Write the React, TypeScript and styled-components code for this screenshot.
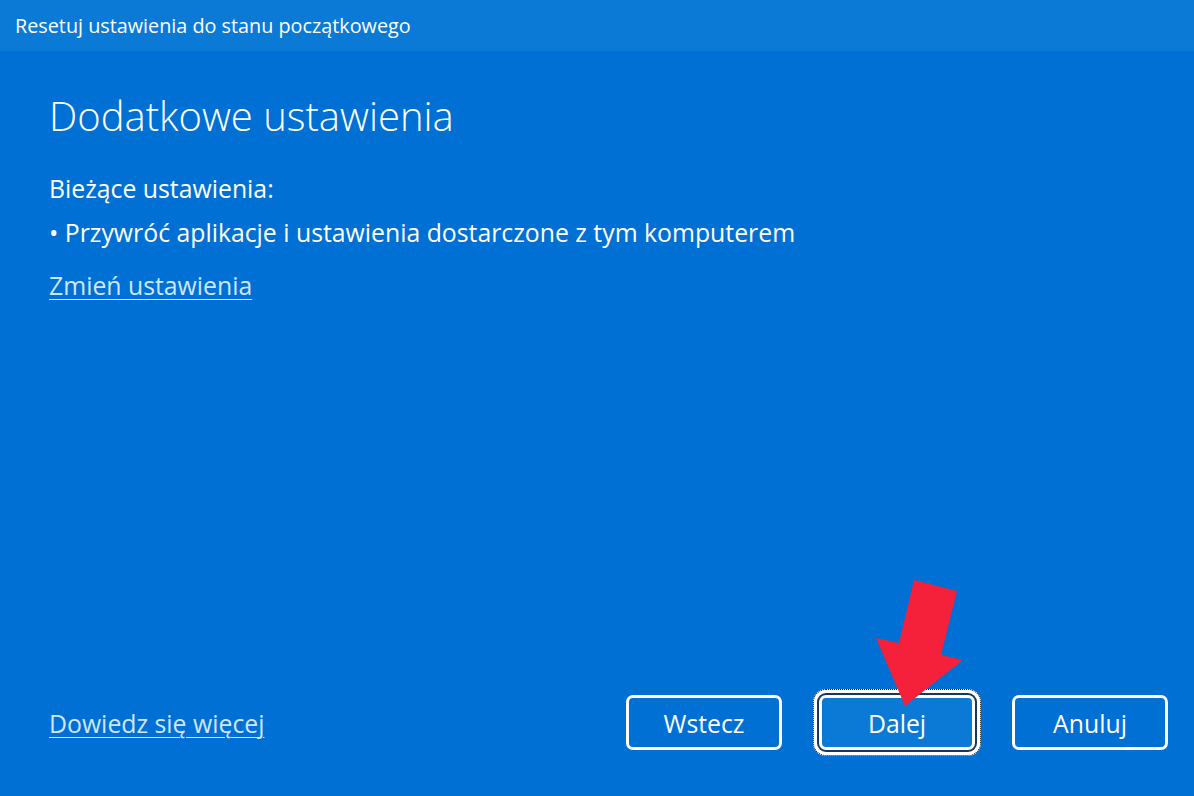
import React from 'react';
import styled, { createGlobalStyle } from 'styled-components';

const GlobalStyle = createGlobalStyle`
  html, body {
    margin: 0;
    padding: 0;
    background: #0070d4;
  }
  body {
    font-family: "Open Sans", "Noto Sans", "Liberation Sans", sans-serif;
    color: #ffffff;
  }
`;

const Window = styled.div`
  width: 1194px;
  height: 796px;
  display: flex;
  flex-direction: column;
  background: #0070d4;
  overflow: hidden;
`;

const TitleBar = styled.div`
  height: 51px;
  display: flex;
  align-items: center;
  padding: 0 15px;
  background: #0a7ad6;
  font-size: 19.8px;
`;

const Body = styled.div`
  flex: 1;
  display: flex;
  flex-direction: column;
  padding: 38px 26px 46px 49px;
`;

const Heading = styled.h1`
  margin: 0 0 23px;
  font-size: 40px;
  font-weight: 300;
  line-height: 54px;
`;

const Line = styled.p`
  margin: 0;
  font-size: 24.8px;
  line-height: 44px;
`;

const TextLink = styled.a<{ $gap?: number }>`
  display: inline-block;
  margin-top: ${(p) => p.$gap ?? 0}px;
  font-size: 24.8px;
  line-height: 30px;
  color: #cfe6ff;
  text-decoration: underline;
  text-underline-offset: 4px;
  text-decoration-thickness: 1px;
  cursor: pointer;
`;

const Spacer = styled.div`
  flex: 1;
`;

const Footer = styled.div`
  display: flex;
  align-items: center;
  justify-content: space-between;
`;

const Buttons = styled.div`
  position: relative;
  display: flex;
  gap: 37px;
`;

const Button = styled.button<{ $focused?: boolean }>`
  box-sizing: border-box;
  width: 156px;
  height: 55px;
  border: 3px solid #ffffff;
  border-radius: 7px;
  background: ${(p) => (p.$focused ? '#0a7ad6' : 'transparent')};
  color: #ffffff;
  font-family: inherit;
  font-size: 24.8px;
  cursor: pointer;
  box-shadow: ${(p) => (p.$focused ? '0 0 0 2px #17385c, 0 0 0 6px #ffffff' : 'none')};
  outline: ${(p) => (p.$focused ? '1px dotted #000000' : 'none')};
  outline-offset: 5px;
`;

const Arrow = styled.svg`
  position: absolute;
  left: 245px;
  top: -116px;
  width: 90px;
  height: 130px;
  pointer-events: none;
`;

export default function App() {
  return (
    <>
      <GlobalStyle />
      <Window>
        <TitleBar>Resetuj ustawienia do stanu początkowego</TitleBar>
        <Body>
          <Heading>Dodatkowe ustawienia</Heading>
          <Line>Bieżące ustawienia:</Line>
          <Line>• Przywróć aplikacje i ustawienia dostarczone z tym komputerem</Line>
          <div>
            <TextLink $gap={16}>Zmień ustawienia</TextLink>
          </div>
          <Spacer />
          <Footer>
            <TextLink>Dowiedz się więcej</TextLink>
            <Buttons>
              <Button>Wstecz</Button>
              <Button $focused>Dalej</Button>
              <Button>Anuluj</Button>
              {/* red pointer drawn over the "Dalej" button; coords relative to (871, 579) */}
              <Arrow viewBox="0 0 90 130">
                <polygon
                  points="43,1 86,12 70,76 92,81 34,127 5,59 28,64"
                  fill="#f5203a"
                />
              </Arrow>
            </Buttons>
          </Footer>
        </Body>
      </Window>
    </>
  );
}
